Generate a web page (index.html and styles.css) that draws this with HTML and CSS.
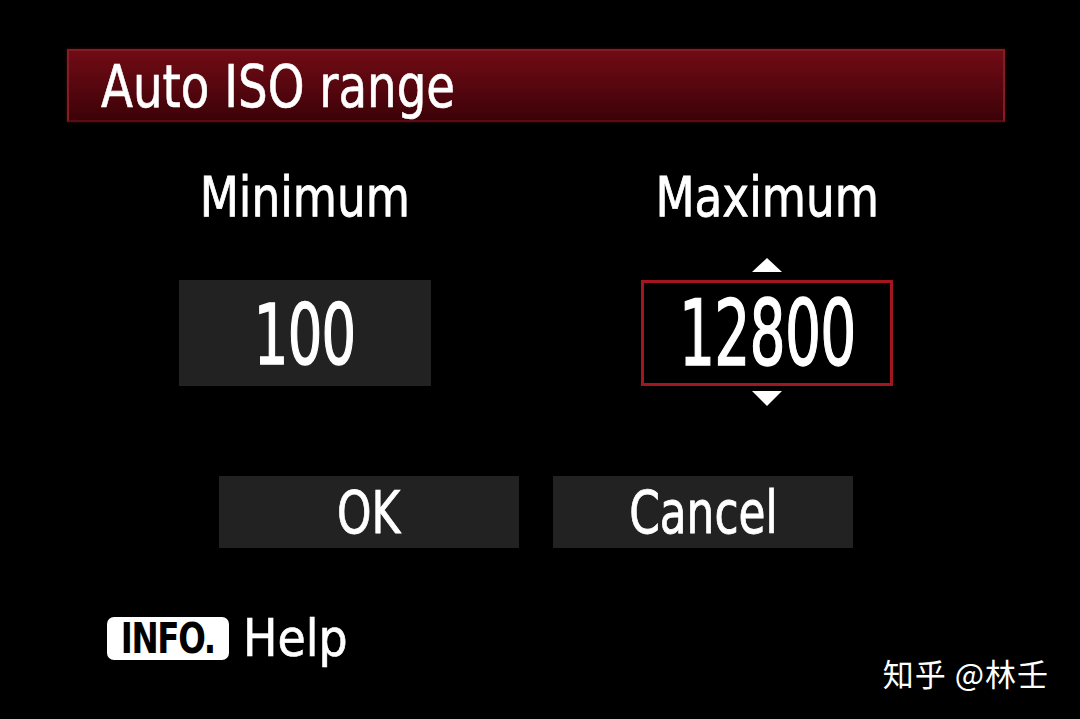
FILE: index.html
```html
<!DOCTYPE html>
<html lang="en">
<head>
<meta charset="utf-8">
<title>Auto ISO range</title>
<link rel="stylesheet" href="styles.css">
</head>
<body>
<main class="screen">
  <header class="title-bar"><span class="title-text">Auto ISO range</span></header>

  <section class="range">
    <div class="range-col">
      <div class="label"><span class="label-text">Minimum</span></div>
      <div class="arrow arrow-up hidden"></div>
      <div class="value-box"><span class="digits">100</span></div>
      <div class="arrow arrow-down hidden"></div>
    </div>
    <div class="range-col">
      <div class="label"><span class="label-text">Maximum</span></div>
      <div class="arrow arrow-up"></div>
      <div class="value-box selected"><span class="digits big">12800</span></div>
      <div class="arrow arrow-down"></div>
    </div>
  </section>

  <section class="actions">
    <div class="btn"><span class="btn-text">OK</span></div>
    <div class="btn"><span class="btn-text">Cancel</span></div>
  </section>

  <footer class="help">
    <span class="info-key"><span class="info-text">INFO.</span></span>
    <span class="help-text">Help</span>
  </footer>

  <div class="watermark">知乎 @林壬</div>
</main>
</body>
</html>
```

FILE: styles.css
```css
* { box-sizing: border-box; }

html, body {
  margin: 0;
  padding: 0;
  background: #000;
}

body {
  width: 1080px;
  height: 719px;
  overflow: hidden;
  color: #fff;
  font-family: "DejaVu Sans Condensed", "DejaVu Sans", sans-serif;
  font-stretch: condensed;
}

.screen {
  position: relative;
  width: 1080px;
  height: 719px;
  padding-top: 49px;
  display: flex;
  flex-direction: column;
}

/* Red header bar */
.title-bar {
  margin-left: 67px;
  width: 938px;
  height: 73px;
  border: 2px solid #841c24;
  border-bottom-color: #5a0c12;
  background: linear-gradient(#700b14 0%, #5a070f 45%, #3c0208 100%);
  padding-left: 32px;
  display: flex;
  align-items: center;
  box-shadow: 0 0 3px rgba(140, 20, 30, 0.5);
}

.title-text {
  display: inline-block;
  white-space: nowrap;
  font-size: 59px;
  line-height: 1;
  margin-top: 2px;
  transform: scaleX(0.88);
  transform-origin: left center;
  -webkit-text-stroke: 0.6px #fff;
}

/* Minimum / Maximum */
.range {
  margin-top: 47px;
  margin-left: 179px;
  display: grid;
  grid-template-columns: 252px 252px;
  column-gap: 210px;
}

.range-col {
  display: flex;
  flex-direction: column;
  align-items: center;
}

.label {
  height: 56px;
  display: flex;
  justify-content: center;
}

.label-text {
  display: inline-block;
  white-space: nowrap;
  font-size: 56px;
  line-height: 56px;
  transform: scaleX(0.9);
  -webkit-text-stroke: 0.8px #fff;
}

.arrow {
  width: 0;
  height: 0;
  border-left: 15px solid transparent;
  border-right: 15px solid transparent;
}

.arrow-up {
  margin-top: 33px;
  margin-bottom: 8px;
  border-bottom: 14px solid #fff;
}

.arrow-down {
  margin-top: 5px;
  border-top: 15px solid #fff;
}

.hidden {
  visibility: hidden;
}

.value-box {
  width: 252px;
  height: 106px;
  background: #222;
  display: flex;
  align-items: center;
  justify-content: center;
}

.value-box.selected {
  background: #000;
  border: 3px solid #a3161f;
}

.digits {
  display: inline-block;
  font-size: 84px;
  line-height: 1;
  transform: scaleX(0.72);
  letter-spacing: -1px;
  margin-top: 4px;
  -webkit-text-stroke: 1.4px #fff;
}

.digits.big {
  font-size: 90px;
  transform: scaleX(0.7);
  margin-top: 2px;
}

/* OK / Cancel */
.actions {
  margin-top: 70px;
  margin-left: 219px;
  display: flex;
  gap: 34px;
}

.btn {
  width: 300px;
  height: 72px;
  background: #222;
  display: flex;
  align-items: center;
  justify-content: center;
}

.btn-text {
  display: inline-block;
  white-space: nowrap;
  font-size: 58px;
  line-height: 1;
  margin-top: 2px;
  transform: scaleX(0.84);
  -webkit-text-stroke: 0.8px #fff;
}

/* INFO. Help */
.help {
  margin-top: 65px;
  margin-left: 107px;
  display: flex;
  align-items: center;
  gap: 14px;
}

.info-key {
  width: 122px;
  height: 43px;
  background: #fff;
  border-radius: 7px;
  display: flex;
  align-items: center;
  justify-content: center;
}

.info-text {
  display: inline-block;
  color: #000;
  font-weight: bold;
  font-size: 42px;
  line-height: 1;
  letter-spacing: -1.5px;
  transform: scaleX(0.86);
  margin-top: 1px;
}

.help-text {
  display: inline-block;
  font-size: 51px;
  line-height: 51px;
  -webkit-text-stroke: 0.6px #fff;
}

.watermark {
  position: absolute;
  right: 31px;
  bottom: 31px;
  font-family: "Noto Sans CJK SC", "Noto Sans", sans-serif;
  font-size: 31px;
  line-height: 1;
  letter-spacing: 1px;
  color: #fff;
}
```
